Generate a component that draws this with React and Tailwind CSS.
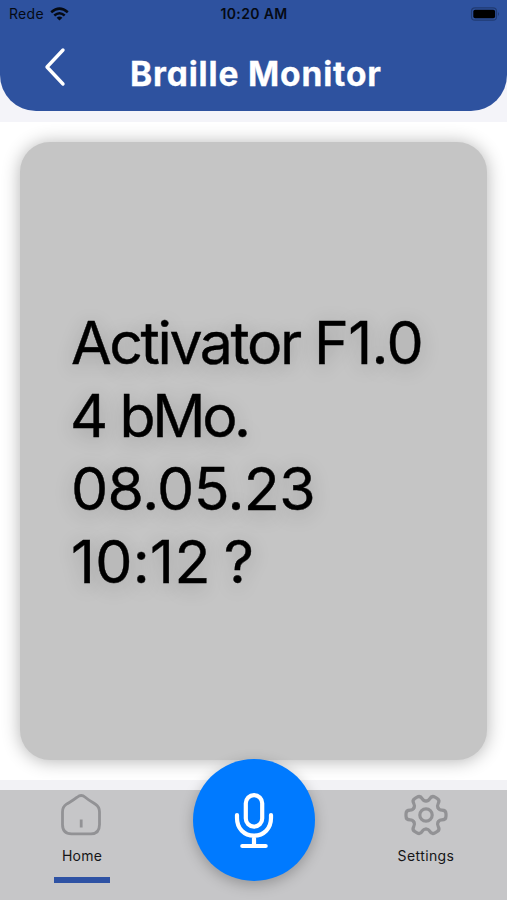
import React from "react";

const TOOTH =
  "M12.1 -7 C13.2 -5.1 14.2 -4.9 15.8 -4.9 C18.6 -4.9 20 -3.5 20 -1.2 V1.2 C20 3.5 18.6 4.9 15.8 4.9 C14.2 4.9 13.2 5.1 12.1 7";

function WifiIcon() {
  return (
    <svg className="ml-[6px] h-[14px] w-[19px]" viewBox="0 0 19 14" fill="none" stroke="#050a14" strokeWidth="2.5">
      <path d="M1.2 5.2 Q9.5 -2 17.8 5.2" />
      <path d="M4.3 8.5 Q9.5 4 14.7 8.5" />
      <path d="M9.5 13.6 L6.6 10.7 Q9.5 8.4 12.4 10.7 Z" fill="#050a14" stroke="none" />
    </svg>
  );
}

function StatusBar() {
  return (
    <div className="grid h-[27px] grid-cols-3 items-center text-[14px] text-[#050a14]">
      <div className="flex items-center pl-[9px]">
        <span className="tracking-[0.3px]">Rede</span>
        <WifiIcon />
      </div>
      <div className="pl-[1px] text-center text-[14px] font-semibold tracking-[0.35px] whitespace-nowrap">10:20 AM</div>
      <div className="flex justify-end pr-[7px]">
        <svg className="h-[14px] w-[30px]" viewBox="0 0 30 14">
          <rect x="1.5" y="0.8" width="25" height="12.4" rx="3.5" fill="none" stroke="#213b73" strokeWidth="1.2" />
          <rect x="3.3" y="2.7" width="21.8" height="8.6" rx="1.8" fill="#000" />
          <path d="M28 5 Q30 7 28 9 Z" fill="#213b73" />
        </svg>
      </div>
    </div>
  );
}

function Header() {
  return (
    <header className="h-[122px] bg-[#f4f4f9]">
      <div className="h-[111px] rounded-b-[36px] bg-[#2e529f]">
        <StatusBar />
        <div className="flex items-start">
          <svg className="mt-[19px] ml-[43px] h-[42px] w-[24px]" viewBox="0 0 24 42" fill="none" stroke="#fff" strokeWidth="3.4" strokeLinecap="round" strokeLinejoin="round">
            <path d="M20 4 L4 21 L20 38" />
          </svg>
          <h1 className="mt-[26px] ml-[63px] text-[33.5px] leading-[42px] font-bold tracking-[0.85px] whitespace-nowrap text-white [-webkit-text-stroke:0.3px_white] [font-feature-settings:'cv11']">
            Braille Monitor
          </h1>
        </div>
      </div>
    </header>
  );
}

function HomeIcon() {
  return (
    <svg className="h-[44px] w-[44px]" viewBox="0 0 44 44" fill="none" stroke="#929295" strokeWidth="2.8" strokeLinecap="round" strokeLinejoin="round">
      <path d="M17.2 4.2 Q21.2 0.8 25.2 4.2 C28.5 7 32 9 35.5 11.2 Q39.5 13.8 39.5 19 V31.5 Q39.5 40.8 31 40.8 H11.4 Q2.5 40.8 2.5 31.5 V19 Q2.5 13.8 6.5 11.2 C10 9 13.8 7 17.2 4.2 Z" />
      <path d="M21.2 26.5 V34.5" strokeLinecap="butt" />
    </svg>
  );
}

function GearIcon() {
  return (
    <svg className="h-[44px] w-[44px]" viewBox="-22 -22 44 44" fill="none" stroke="#929295" strokeWidth="3.2" strokeLinecap="round" strokeLinejoin="round">
      {[0, 60, 120, 180, 240, 300].map((angle) => (
        <path key={angle} d={TOOTH} transform={`rotate(${angle})`} />
      ))}
      <circle r="6.2" />
    </svg>
  );
}

function MicButton() {
  return (
    <button className="-mt-[31px] flex h-[122px] w-[122px] items-center justify-center rounded-full bg-[#007aff] shadow-[0_4px_14px_rgba(0,0,0,0.25)]">
      <svg className="h-[60px] w-[42px]" viewBox="0 0 42 60" fill="none" stroke="#fff" strokeWidth="4.2" strokeLinecap="round" strokeLinejoin="round">
        <rect x="12.8" y="5.1" width="16.4" height="31.5" rx="8.2" />
        <path d="M4 25 V28 C4 38.5 11 45.6 21 45.6 C31 45.6 38 38.5 38 28 V25 M21 45.6 V56 M9.3 56 H32.7" />
      </svg>
    </button>
  );
}

function TabBar() {
  return (
    <footer className="h-[120px] bg-[#f2f2f5] pt-[10px]">
      <nav className="flex h-[110px] items-start justify-between bg-[#c6c6c8] text-[14px] leading-[20px] text-[#151517]">
        <div className="ml-[54px] flex w-[56px] flex-col items-center pt-[3px]">
          <HomeIcon />
          <span className="mt-[9px] tracking-[0.2px]">Home</span>
          <span className="mt-[11px] h-[6px] w-full bg-[#2e52a4]" />
        </div>
        <MicButton />
        <div className="mr-[51px] -ml-[1px] flex w-[60px] flex-col items-center pt-[3px]">
          <GearIcon />
          <span className="mt-[9px] tracking-[0.4px]">Settings</span>
        </div>
      </nav>
    </footer>
  );
}

export default function App() {
  return (
    <div className="flex h-[900px] w-[507px] flex-col overflow-hidden bg-white font-['Inter','Liberation_Sans',sans-serif]">
      <Header />
      <main className="flex-1 px-[20px] pt-[20px]">
        <section className="flex h-[618px] flex-col justify-center rounded-[30px] bg-[#c5c5c5] pt-[2px] pl-[51px] shadow-[0_1px_18px_rgba(0,0,0,0.3)]">
          <p className="text-[59px] leading-[73px] tracking-[-0.6px] whitespace-nowrap text-black [-webkit-text-stroke:0.4px_black] [text-shadow:0_4px_20px_rgba(0,0,0,0.22)]">
            <span className="tracking-[-2.4px]">Activator </span>F1.0
            <br />
            <span className="-ml-[1px]">4 </span><span className="-ml-[4px] tracking-[-3.4px]">bMo.</span>
            <br />
            08.05.23
            <br />
            <span className="tracking-[0.3px]">10:12</span><span className="-ml-[3px]"> ?</span>
          </p>
        </section>
      </main>
      <TabBar />
    </div>
  );
}
